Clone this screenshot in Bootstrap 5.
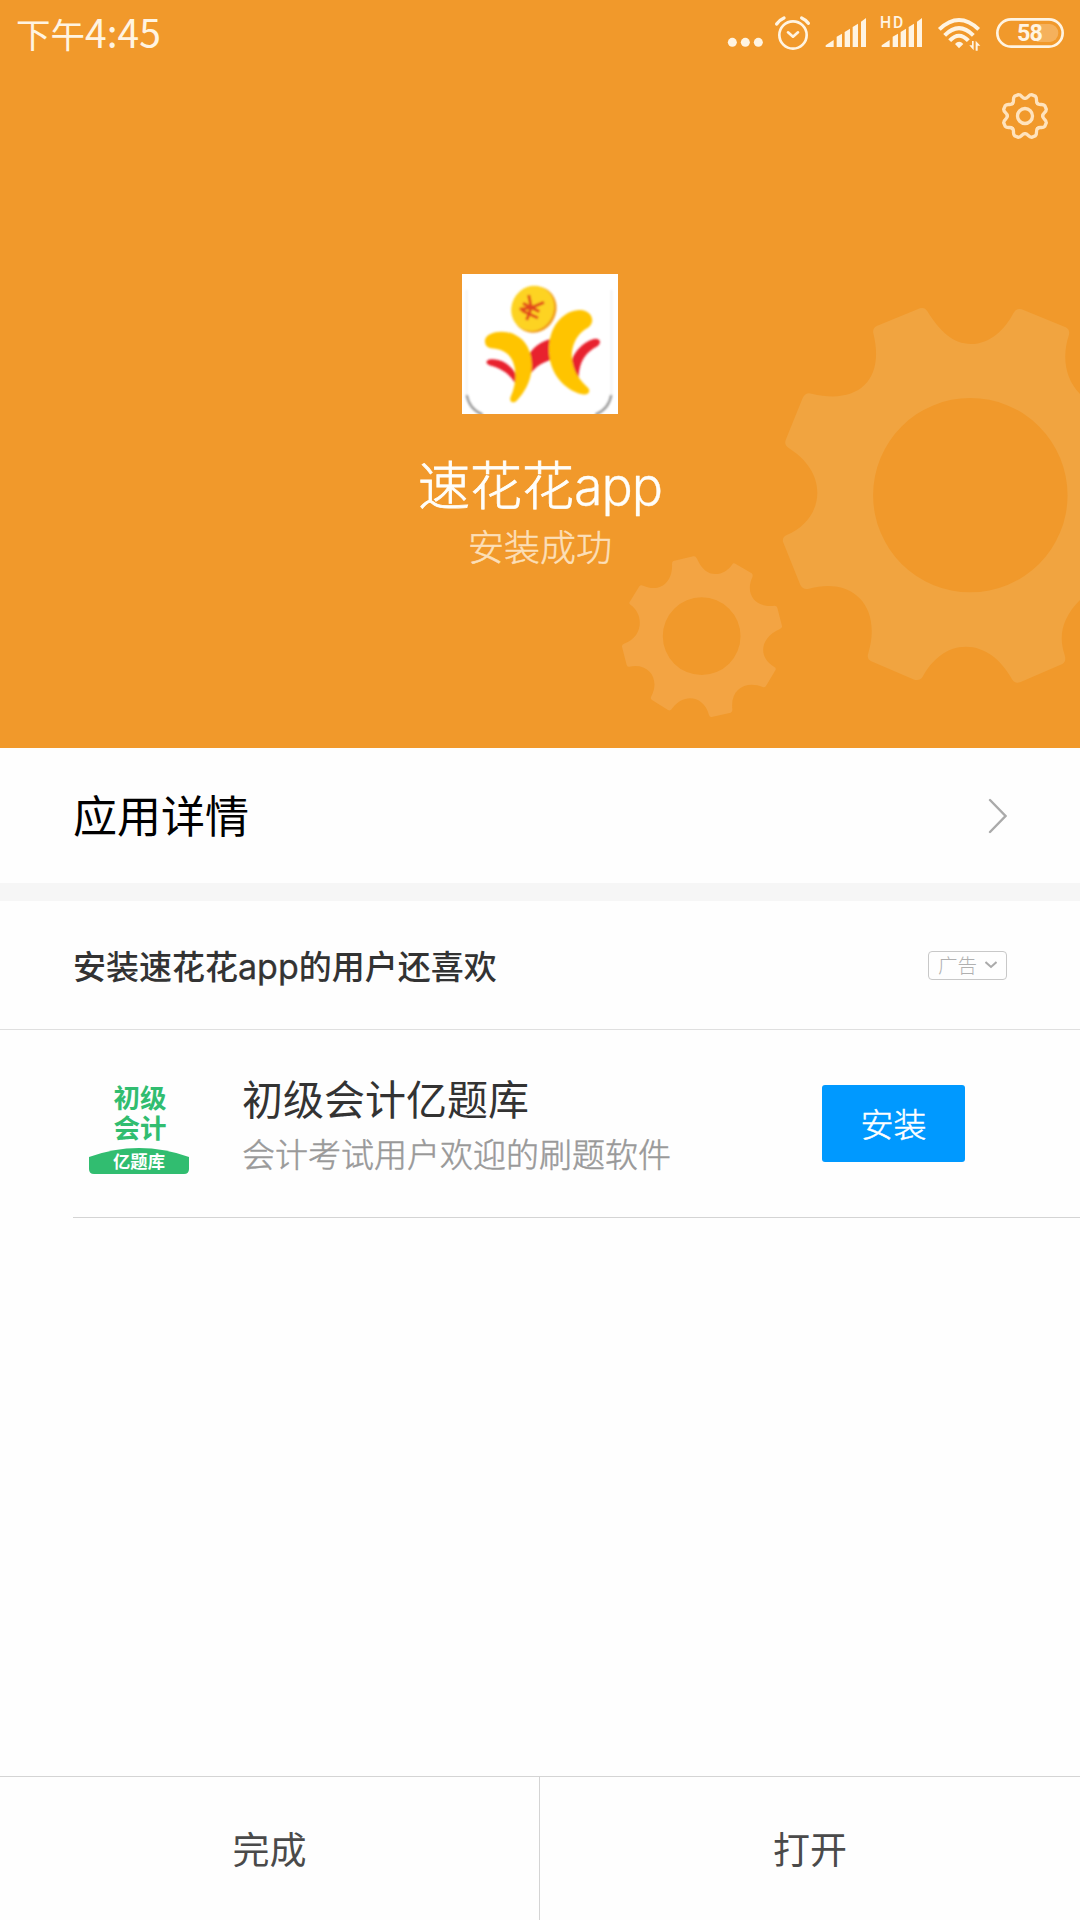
<!DOCTYPE html>
<html lang="zh-CN">
<head>
<meta charset="utf-8">
<meta name="viewport" content="width=device-width, initial-scale=1">
<title>安装成功</title>
<link href="https://cdn.jsdelivr.net/npm/bootstrap@5.3.0/dist/css/bootstrap.min.css" rel="stylesheet">
<style>
  body { font-family: "Noto Sans CJK SC", "Noto Sans", sans-serif; background: #fefefe; color: #000; line-height: 1; }
  .screen { width: 1080px; height: 1920px; overflow: hidden; }
  .hero { height: 748px; background: #f1992b; }
  .gears { right: 0; top: 290px; width: 480px; height: 458px; }
  .statusbar { height: 54px; color: #fff4e2; padding-left: 16px; }
  .clock { font-size: 34.5px; line-height: 40px; margin-top: 11px; }
  .clock span { font-size: 39px; }
  .settings-row { height: 124px; padding: 38px 31px 0 0; }
  .app-icon { margin-top: 96px; }
  .app-name { font-size: 52px; font-weight: 300; line-height: 60px; margin-top: 39px; color: #fffefa; -webkit-text-stroke: .8px #fffefa; }
  .app-name span { font-family: Inter, sans-serif; letter-spacing: -1px; -webkit-text-stroke: .3px #fffefa; }
  .app-state { font-size: 36px; font-weight: 300; line-height: 40px; margin-top: 8px; color: #fcdfb8; -webkit-text-stroke: .5px #fcdfb8; }
  .detail-row { height: 135px; padding: 0 73px; font-size: 44px; }
  .detail-row span { padding-bottom: 4px; }
  .gap-band { height: 18px; background: #f6f6f6; }
  .list-head { height: 129px; padding: 0 73px; border-bottom: 1px solid #dfdfdf; font-size: 33px; font-weight: 500; color: #333; }
  .list-title { padding-top: 2px; }
  .list-title span { font-family: Inter, sans-serif; font-size: 34px; font-weight: 400; -webkit-text-stroke: .3px #333; }
  .ad-tag { width: 79px; height: 29px; border: 1px solid #c8c8c8; border-radius: 4px; font-size: 19.5px; font-weight: 300; color: #b0b0b0; }
  .ad-item { height: 188px; margin-left: 73px; padding-right: 115px; border-bottom: 1px solid #d4d4d4; }
  .ad-copy { padding: 0 0 3px 37px; }
  .ad-title { font-size: 41px; line-height: 50px; color: #333; margin-bottom: 11px; }
  .ad-sub { font-size: 33px; line-height: 40px; color: #999; font-weight: 300; -webkit-text-stroke: .5px #999; }
  .btn-install { width: 143px; height: 77px; background: #0099ff; color: #fff; font-size: 33px; font-weight: 300; border-radius: 3px; -webkit-text-stroke: .5px #fff; }
  .btn-install:hover { background: #008ae6; color: #fff; }
  .bottom-bar { height: 144px; border-top: 1px solid #d4d4d4; }
  .bottom-bar button { font-size: 37px; color: #4a4a4a; background: none; border: 0; }
  .bottom-bar button:first-child { border-right: 1px solid #d4d4d4; }
</style>
</head>
<body>
<main class="screen d-flex flex-column">
  <header class="hero position-relative">
    <svg class="gears position-absolute" viewBox="0 0 1440 1374" aria-hidden="true">
      <path fill="#f1a440" fill-rule="evenodd" d="M830 108L960 55Q974 50 982 64C1020 125 1060 162 1113 162C1170 162 1215 118 1241 68Q1250 53 1265 58L1397 112Q1410 118 1407 134C1385 200 1395 265 1440 312V930C1385 985 1375 1040 1394 1095Q1400 1115 1387 1122L1262 1176Q1245 1183 1236 1168C1205 1110 1155 1070 1098 1070C1040 1070 995 1110 968 1160Q960 1173 943 1169L812 1113Q799 1106 805 1089C845 955 765 860 627 896Q610 901 601 885L549 755Q546 742 560 735C620 710 652 660 652 608C652 555 620 508 566 474Q552 465 557 450L608 324Q616 306 635 311C775 345 855 270 820 130Q817 114 830 108ZM1111 324A291 291 0 1 0 1111 907A291 291 0 1 0 1111 324Z"/>
      <path fill="#f3a443" fill-rule="evenodd" d="M220 813L280 799Q286 797 291 806C305 838 325 852 345 852C368 852 385 840 396 824Q400 818 406 821L455 850Q460 854 457 862C433 915 470 955 524 947Q530 947 532 953L546 1008Q547 1013 540 1017C475 1045 477 1105 522 1130Q529 1134 527 1139L498 1188Q494 1193 488 1191C440 1172 390 1195 397 1258Q398 1265 392 1268L335 1281Q329 1282 327 1275C311 1215 249 1210 217 1255Q212 1264 204 1260L156 1230Q150 1226 154 1219C180 1170 150 1118 88 1130Q82 1132 80 1125L66 1070Q65 1064 72 1061C133 1040 130 970 92 945Q86 941 89 936L118 889Q122 883 130 887C178 909 219 878 216 822Q216 815 220 813ZM305 922A116 116 0 1 0 305 1155A116 116 0 1 0 305 922Z"/>
    </svg>

    <div class="statusbar d-flex justify-content-between">
      <div class="clock">下午<span>4:45</span></div>
      <svg width="370" height="54" viewBox="0 0 1110 162" fill="#fff4e2" aria-hidden="true">
        <circle cx="67" cy="127" r="13.5"/><circle cx="106" cy="127" r="13.5"/><circle cx="145" cy="127" r="13.5"/>
        <g fill="none" stroke="#fff4e2" stroke-width="8" stroke-linecap="round" stroke-linejoin="round">
          <circle cx="249" cy="105" r="41"/>
          <path d="M234 97L249 110L264 97"/>
          <path stroke-width="10" d="M200 72Q208 60 222 54M295 70Q287 59 275 54"/>
        </g>
        <path d="M347 141V136L371 120V141ZM380 141V110L396 101V141ZM404 141V96L420 86V141ZM428 141V81L444 71V141ZM453 141V65L468 54V141Z"/>
        <path d="M515 141V136L539 120V141ZM548 141V110L564 101V141ZM572 141V96L588 86V141ZM596 141V81L612 71V141ZM621 141V65L636 54V141Z"/>
        <text x="510" y="84" font-family="Roboto" font-weight="500" font-size="47" textLength="70">HD</text>
        <path fill="none" stroke="#fff4e2" stroke-width="12" d="M688 88Q747 32 806 88M704 106Q747 63 790 106M719 122Q747 92 775 122"/>
        <path d="M735 132Q747 118 760 132L747 145Z"/>
        <path d="M786 123H791V151L778 136H786ZM797 152V122L811 137H803V152Z"/>
        <path fill-opacity=".27" d="M980 72H1019A26 27 0 0 1 1019 126H980Z"/>
        <rect x="862" y="58" width="196" height="82" rx="41" fill="none" stroke="#fff4e2" stroke-width="8"/>
        <text x="921" y="124" font-family="Roboto" font-weight="700" font-size="70" textLength="78">58</text>
      </svg>
    </div>

    <div class="settings-row d-flex justify-content-end">
      <svg width="48" height="48" viewBox="-72 -72 144 144" fill="none" stroke="#ffe3bd" stroke-width="10" stroke-linecap="round" role="img" aria-label="设置">
        <defs><path id="tooth" d="M0-53C10-53 9-64 20-64L31.1-59.4C38.9-51.6 30.4-44.6 37.5-37.5"/></defs>
        <use href="#tooth"/><use href="#tooth" transform="rotate(45)"/><use href="#tooth" transform="rotate(90)"/><use href="#tooth" transform="rotate(135)"/>
        <use href="#tooth" transform="rotate(180)"/><use href="#tooth" transform="rotate(225)"/><use href="#tooth" transform="rotate(270)"/><use href="#tooth" transform="rotate(315)"/>
        <circle r="22.5"/>
      </svg>
    </div>

    <div class="d-flex flex-column align-items-center position-relative">
      <svg class="app-icon" width="156" height="140" viewBox="66 42 468 420" role="img" aria-label="速花花">
        <defs><filter id="soft"><feGaussianBlur stdDeviation="2.5"/></filter></defs>
        <path fill="#fff" d="M66 42H534V462H66Z"/>
        <g filter="url(#soft)">
          <path fill="none" stroke="#e9e9e9" stroke-width="3" d="M80 90V405M514 90V405"/>
          <path fill="none" stroke="#999" stroke-width="7" d="M80 405Q88 448 128 464M514 405Q506 448 466 464"/>
          <ellipse cx="284" cy="149" rx="64" ry="71" fill="#f09a1e" transform="rotate(28 284 149)"/>
          <ellipse cx="278" cy="145" rx="63" ry="69" fill="#fdd321" transform="rotate(28 278 145)"/>
          <path fill="none" stroke="#e2481c" stroke-width="9" d="M266 105L274 143L312 127M274 143L260 180M239 148L274 143M249 130L298 155M246 152L294 174"/>
          <path fill="#e8212e" d="M262 288C280 262 300 245 334 236V300C308 306 290 318 270 342ZM145 299C178 293 208 308 234 350L230 378C214 345 185 325 148 316Q132 308 145 299ZM395 300C408 265 440 240 466 236C482 236 484 250 473 258C440 276 418 300 416 354L395 325Z"/>
          <path fill="#ffc400" d="M135 240C140 215 190 207 225 224C260 240 279 280 275 328C272 364 253 400 230 422C219 433 206 424 212 410C237 355 228 294 194 276C176 263 155 268 143 261Q133 253 135 240ZM420 150C446 150 460 170 456 186C453 200 440 205 429 213C402 235 390 273 398 309C405 342 423 365 444 383C454 394 444 407 427 403C365 388 322 328 327 257C332 191 374 151 420 150Z"/>
        </g>
      </svg>
      <div class="app-name">速花花<span>app</span></div>
      <div class="app-state">安装成功</div>
    </div>
  </header>

  <a href="#" class="detail-row d-flex align-items-center justify-content-between text-decoration-none text-black">
    <span>应用详情</span>
    <svg width="20" height="36" viewBox="0 0 20 36" fill="none" stroke="#aaa" stroke-width="2.4" stroke-linecap="round" aria-hidden="true"><path d="M3 2L18.5 18L3 34"/></svg>
  </a>
  <div class="gap-band"></div>

  <section>
    <div class="list-head d-flex align-items-center justify-content-between">
      <div class="list-title">安装速花花<span>app</span>的用户还喜欢</div>
      <div class="ad-tag d-flex align-items-center justify-content-center gap-2">广告
        <svg width="12" height="8" viewBox="0 0 12 8" fill="none" stroke="#aaa" stroke-width="2" aria-hidden="true"><path d="M.5 1L6 6L11.5 1"/></svg>
      </div>
    </div>
    <div class="ad-item d-flex align-items-center">
      <svg width="132" height="132" viewBox="73 1057 132 132" role="img" aria-label="初级会计亿题库" font-family="Noto Sans CJK SC" font-weight="700" text-anchor="middle">
        <text x="140" y="1107" font-size="26.5" fill="#31bd70">初级</text>
        <text x="140" y="1136.5" font-size="26.5" fill="#31bd70">会计</text>
        <path fill="#31bd70" d="M89 1156Q139 1138 189 1156V1168Q189 1173 184 1173H94Q89 1173 89 1168Z"/>
        <text x="139" y="1167" font-size="17.3" fill="#fff">亿题库</text>
      </svg>
      <div class="flex-grow-1 ad-copy">
        <div class="ad-title">初级会计亿题库</div>
        <div class="ad-sub">会计考试用户欢迎的刷题软件</div>
      </div>
      <button type="button" class="btn btn-install p-0">安装</button>
    </div>
  </section>

  <footer class="bottom-bar d-flex mt-auto">
    <button type="button" class="col-6">完成</button>
    <button type="button" class="col-6">打开</button>
  </footer>
</main>
<script src="https://cdn.jsdelivr.net/npm/bootstrap@5.3.0/dist/js/bootstrap.bundle.min.js"></script>
</body>
</html>
